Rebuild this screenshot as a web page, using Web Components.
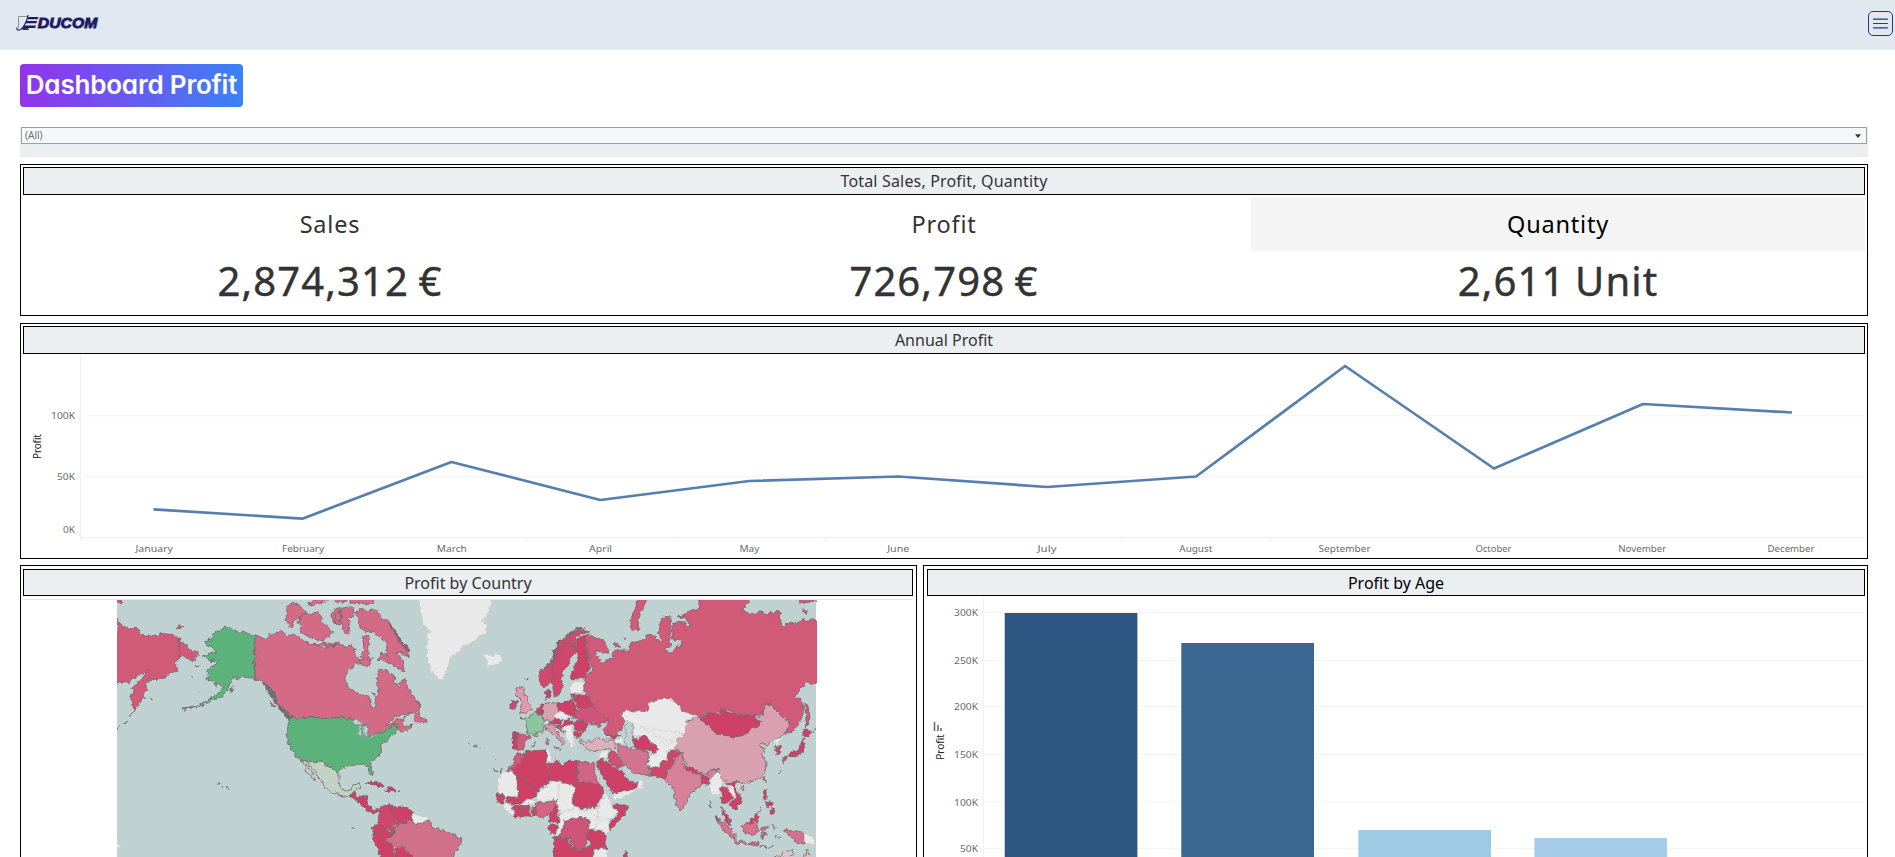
<!DOCTYPE html>
<html lang="en">
<head>
<meta charset="utf-8">
<title>Dashboard Profit</title>
<style>
html,body{margin:0;height:100%;overflow:hidden;background:#fff;font-family:"Noto Sans","Open Sans",sans-serif}
</style>
</head>
<body>
<profit-dashboard></profit-dashboard>
<script>
const define = (name, html, setup) => customElements.define(name, class extends HTMLElement {
  constructor() {
    super();
    this.attachShadow({ mode: 'open' });
  }
  connectedCallback() {
    this.shadowRoot.innerHTML = html;
    if (setup) setup.call(this, this.shadowRoot);
  }
});

define('educom-logo', `
<style>:host{display:block;width:84px;height:20px}svg{display:block}</style>
<svg width="84" height="20" viewBox="15 13 84 20">
  <path d="M18.5 28V16.5H28" fill="none" stroke="#8b8e96" stroke-width="1"/>
  <path d="M23 28h5l1 2h-7z" fill="#333"/>
  <path d="M17 27.5q-1 3 2.500 2.500Q24 28.500 27.500 18L28 15" fill="none" stroke="#2a2570" stroke-width="1.200"/>
  <path d="M28.500 17H38.500L37.700 19.300H27.300zM26.500 21H37.200L36.400 23.300H25zM24.500 25.500H36L35.200 28H22.500z" fill="#211b66"/>
  <text x="37.800" y="27.800" textLength="59.500" lengthAdjust="spacingAndGlyphs" font-family="Liberation Sans,sans-serif" font-weight="700" font-style="italic" font-size="15.300" fill="#211b66" stroke="#211b66" stroke-width=".9">DUCOM</text>
</svg>`);

define('menu-button', `
<style>:host{display:block}button{display:block;box-sizing:border-box;width:25px;height:25px;padding:0;border:1px solid #1e3a8a;border-radius:5px;background:none}svg{display:block}</style>
<button aria-label="Menu"><svg width="23" height="23" fill="none" stroke="#1e3a8a" stroke-width="1.200" stroke-linecap="round"><path d="M4.500 7.200h14M4.500 11.500h14M4.500 15.800h14"/></svg></button>`);

define('top-bar', `
<style>:host{display:flex;box-sizing:border-box;height:50px;padding:11px 2px 0 15px;justify-content:space-between;align-items:flex-start;background:#e2e8f0}educom-logo{margin-top:2px}</style>
<educom-logo></educom-logo><menu-button></menu-button>`);

define('page-badge', `
<style>:host{display:flex;box-sizing:border-box;width:223px;height:43px;border-radius:4px;align-items:center;justify-content:center;background:linear-gradient(90deg,#9333ea,#3b82f6);color:#fff;font:600 26px/41px Inter,sans-serif;font-feature-settings:"cv11";letter-spacing:-.2px;padding-bottom:2px;white-space:nowrap}</style>
<slot></slot>`);

define('filter-select', `
<style>:host{display:block;height:30px;background:#ebeff2;padding:0 1px;box-sizing:border-box}
div{display:flex;box-sizing:border-box;height:17px;border:1px solid #a0a0a0;background:#f5f7f9;align-items:center;justify-content:space-between;padding:0 5px 0 3px;font-size:10px;line-height:15px;color:#707070}</style>
<div><span><slot></slot></span><svg width="6" height="4"><path d="M0 .3h6L3 4z" fill="#333"/></svg></div>`);

define('dash-panel', `
<style>:host{display:flex;flex-direction:column;box-sizing:border-box;border:1px solid #000;padding:2px;background:#fff;overflow:hidden}
h2{flex:none;box-sizing:border-box;margin:var(--title-margin,0);height:var(--title-height,28px);border:1px solid #000;background:#ebeff2;font-weight:400;font-size:16px;line-height:26px;text-align:center;color:var(--title-color,#333);letter-spacing:var(--title-spacing,0)}
svg{display:block}</style>
<h2></h2><slot></slot>`, function (root) {
  root.querySelector('h2').textContent = this.getAttribute('heading');
});

define('kpi-cell', `
<style>:host{display:flex;flex-direction:column;flex:1;text-align:center;white-space:nowrap}
.l{height:54px;line-height:55px;font-size:23.500px;color:#333;letter-spacing:.8px}
:host([active]) .l{background:#f4f4f4;color:#000}
.v{height:60px;line-height:60px;font-size:40px;color:#333;-webkit-text-stroke:.4px #333;letter-spacing:1.100px;word-spacing:-2px}</style>
<div class="l"><slot></slot></div><div class="v"><slot name="value"></slot></div>`);

const NS = 'font-family="Noto Sans,sans-serif"';
const label = (x, y, w, t, anchor) =>
  `<text ${NS} x="${x}" y="${y}" font-size="9.800" fill="#6a6a6a" text-anchor="${anchor}" textLength="${w}" lengthAdjust="spacingAndGlyphs">${t}</text>`;
const axisTitle = (x, y, w) =>
  `<text ${NS} font-size="10" fill="#222" text-anchor="middle" textLength="${w}" transform="translate(${x} ${y}) rotate(-90)">Profit</text>`;

define('line-chart', '<style>:host,svg{display:block}</style><div></div>', function (root) {
  const months = [['January',37.5,509.3],['February',42,518.7],['March',30,462],['April',23,500],['May',20,481],['June',22,476.5],['July',19,487],['August',33,476.5],['September',52,366],['October',36,468.5],['November',48,404],['December',47,412.5]];
  let s = '<path d="M80.500 356V540M80 537.500H1865" stroke="#f0f0f0" fill="none"/><path d="M77 415.800H1865M77 476.700H1865" stroke="#f7f7f7" stroke-width="1.500"/>';
  months.forEach(([n, w, y], i) => {
    const tick = 80.5 + 148.75 * (i + 1);
    s += `<path d="M${tick} 538v3" stroke="#f0f0f0"/>` + label(154.2 + 148.8 * i, 552, w, n, 'middle');
  });
  s += label(75, 419, 24, '100K', 'end') + label(75, 480, 18, '50K', 'end') + label(75, 533, 12, '0K', 'end') + axisTitle(40.5, 446.5, 25);
  s += `<polyline fill="none" stroke="#557fae" stroke-width="2.700" stroke-linejoin="round" points="${months.map((m, i) => (153.5 + 148.95 * i).toFixed(1) + ',' + m[2]).join(' ')}"/>`;
  root.querySelector('div').innerHTML = `<svg width="1842" height="202" viewBox="23 354 1842 202">${s}</svg>`;
});

define('bar-chart', '<style>:host,svg{display:block}</style><div></div>', function (root) {
  let s = '<path d="M983.500 599V857" stroke="#f0f0f0"/>';
  [[612.5,'300K'],[660.5,'250K'],[706.5,'200K'],[754.5,'150K'],[802,'100K'],[848.5,'50K']].forEach(([y, t]) => {
    s += `<path d="M980 ${y}H1865" stroke="#f4f4f4"/>` + label(978, y + 3.5, t.length * 6, t, 'end');
  });
  [[1004.7,613,'#2b5782'],[1181.3,643,'#3b6793'],[1358.4,830,'#9fcae4'],[1534.4,838,'#a5cde9']].forEach(([x, y, c]) => {
    s += `<rect x="${x}" y="${y}" width="132.700" height="400" fill="${c}"/>`;
  });
  s += axisTitle(944, 747, 25.5) + '<path d="M934.500 722v9M938 725v6M941 728v3" stroke="#666" stroke-width="1.500"/>';
  root.querySelector('div').innerHTML = `<svg width="938" height="261" viewBox="927 596 938 261">${s}</svg>`;
});

// Coastlines are listed on four adjoining sheets; the letter selects the sheet, its value is the horizontal shift.
const SHEET = { A: 0, B: 690, C: 1140, D: 1590 };
const outline = str => {
  let off = 0;
  return str.trim().split(/\s+/).map(tok => {
    if (tok in SHEET) { off = SHEET[tok]; return ''; }
    const [x, y] = tok.split(',').map(Number);
    return (x + off) + ',' + y;
  }).join(' ').trim();
};
const RED = '#cf4066', RUS = '#d05a78', CAN = '#d36a86', GRN = '#5bb27a', NIL = '#e9e9e9', SEA = '#c0d1d1';
const LAND = [
[RUS,'A 22,88 30,95 42,110 58,114 75,112 88,120 92,135 110,138 135,136 145,140 152,130 180,133 207,145 215,155 230,165 245,180 262,185 265,193 255,202 248,215 235,205 220,198 209,205 195,215 205,230 205,240 190,243 175,252 165,265 150,265 135,268 118,268 108,285 110,300 100,310 100,325 88,340 78,360 72,362 66,335 65,310 75,290 88,275 100,260 118,240 108,245 98,250 90,250 80,262 65,265 60,280 45,275 30,280 15,275'],
[RUS,'A 207,145 209,205'],[RUS,'A 15,25 38,30 32,38 15,40'],[RUS,'A 198,112 210,103 222,108 215,115 203,116'],
[GRN,'A 435,137 410,128 380,125 365,115 345,109 330,122 312,125 305,145 287,155 295,168 315,180 318,188 300,190 280,198 300,212 318,210 320,222 300,232 290,245 300,262 290,268 305,275 318,285 330,283 345,288 330,305 310,318 275,343 245,353 215,358 245,355 275,346 305,332 330,322 345,308 358,292 362,272 380,255 375,270 400,260 420,265 435,268'],
['#6c8070','A 356,300 368,290 370,298 360,310'],['#6c8070','A 255,226 270,229 268,232'],['#6c8070','A 247,264 251,266'],['#6c8070','A 264,302 268,308'],
['#6c8070','A 323,578 328,581'],['#6c8070','A 336,585 342,588'],[GRN,'A 346,592 354,596 350,600'],
['#777','A 72,362 62,374 58,380'],['#777','A 50,392 44,402'],['#777','A 35,406 22,416'],['#8c5565','A 124,322 130,326'],
[CAN,'A 435,137 450,145 468,148 480,133 500,130 515,125 530,138 550,132 575,145 590,162 615,160 640,175 660,165 680,160 B 5,165 20,172 35,165 45,180 50,200 62,212 62,222 50,220 38,228 25,240 15,265 20,285 30,298 60,312 88,322 92,345 100,358 108,345 105,325 115,315 118,300 110,280 112,262 112,240 130,238 150,250 165,260 165,275 175,288 185,275 192,265 205,295 225,325 242,345 238,362 215,370 190,375 165,380 150,395 140,408 165,392 185,385 195,380 185,400 195,410 215,405 215,412 185,428 172,420 175,405 168,400 160,405 150,418 110,435 90,440 85,430 85,415 70,400 50,390 40,388 15,388 0,383 A 545,383 525,360 505,345 490,315 475,300 460,280 450,270 435,268'],
['#66756e','A 458,278 470,283 482,295 496,318 502,340 525,362 545,385 543,398 530,380 505,355 490,325 475,308'],
[CAN,'A 482,336 494,352 486,350'],
[CAN,'A 532,45 565,42 585,65 570,85 555,90 545,110 525,95 530,70'],
[CAN,'A 585,65 605,75 620,65 640,85 635,100 650,105 668,130 650,145 640,155 615,145 600,140 575,130 570,120 580,110 565,100 570,85'],
[CAN,'A 590,42 620,25 660,25 640,38 610,45'],[CAN,'A 670,62 690,52 695,70 690,105 675,100 665,80'],[CAN,'B 2,55 38,50 42,70 25,85 30,105 25,135 15,130 5,110'],[CAN,'A 585,158 620,162 655,160 680,165 650,168 600,168'],
[CAN,'B 30,25 103,25 100,40 60,42 30,38'],[CAN,'B -15,70 -2,60 0,90 -12,100'],[CAN,'A 670,25 710,25 700,40 680,36'],
[CAN,'B 45,70 60,58 80,62 105,60 120,65 125,85 145,95 165,120 175,140 185,155 208,180 205,200 190,195 170,185 190,215 192,245 175,235 150,220 130,210 112,212 120,195 140,190 140,160 125,145 105,130 85,120 75,125 60,110 50,90'],
[CAN,'B 68,140 85,135 90,160 80,185 95,205 88,225 75,218 60,200 72,180'],[CAN,'B 65,205 80,205 92,222 80,230 65,225'],[CAN,'B 225,375 235,362 240,378 255,385 260,400 240,398 222,392'],
['#75656a','B 100,305 107,310 104,317'],['#94606f','B 145,95 165,120 175,140 185,155 208,180 203,182 183,160 168,138'],
[GRN,'A 540,383 B 15,383 35,388 55,398 65,405 80,410 85,430 90,440 110,430 125,428 145,418 155,405 168,400 175,415 165,430 150,440 135,455 122,465 125,485 110,505 95,515 92,525 100,545 98,560 90,555 85,535 75,525 55,525 40,530 20,530 5,535 -5,550 A 678,548 665,528 650,532 640,517 625,517 600,518 575,510 560,500 545,480 535,455 532,430 535,400'],
[SEA,'B 37,396 52,388 68,395 70,402 50,404'],[SEA,'B 57,412 64,408 65,442 57,435'],[SEA,'B 70,408 85,415 82,430 74,440'],[SEA,'B 85,442 108,432 108,438 92,444'],
['#c1d3c4','A 575,510 600,518 625,517 640,517 650,532 665,528 678,548 687,553 688,575 690,590 705,602 B 20,603 30,600 35,585 60,582 62,592 50,603 42,608 35,622 25,620 A 690,615 665,605 645,597 640,580 620,555 605,535 595,520'],
['#c1d3c4','A 575,512 587,520 600,540 612,560 618,572 605,565 590,540 580,520'],
[NIL,'B 235,25 455,25 455,45 445,60 440,75 430,90 440,110 435,130 400,155 375,165 355,185 330,205 325,225 318,245 310,270 290,262 275,240 265,215 258,190 265,165 260,140 270,125 250,105 245,80 240,55'],
[NIL,'B 428,195 445,192 455,200 470,192 485,195 488,208 475,222 455,227 440,222 445,210'],
[RED,'B 75,578 95,573 115,580 135,590 130,596 110,588 90,580'],[RED,'B 135,600 150,593 168,600 165,605 150,605'],['#777','B 175,603 186,604'],['#777','B 34,713 45,716'],['#777','B 220,633 221,635'],['#777','B 400,465 410,469'],['#777','B 418,473 422,476'],['#777','B 385,460 388,461'],['#777','B 462,540 472,542'],['#777','B 480,543 490,538'],['#777','B 467,508 470,509'],
[RED,'B 30,618 40,605 48,612 45,620 65,618 80,622 80,640 85,650 100,662 115,658 118,668 100,668 85,665 70,650 60,635 45,628'],
['#cf486c','B 118,658 135,645 150,640 150,655 155,675 175,685 175,702 162,705 160,735 150,720 125,710 108,700 115,690'],
[RED,'B 150,645 165,652 190,648 205,655 218,665 213,680 218,690 200,690 200,700 180,705 175,690 155,678'],
[RED,'B 100,710 110,702 128,712 115,728 98,728'],
[NIL,'B 218,668 235,680 262,680 265,690 245,700 225,700 213,685'],
['#d0708b','B 160,735 165,708 180,705 195,700 215,690 220,700 240,700 265,690 272,700 280,712 320,725 350,735 365,750 362,765 345,785 338,810 215,810 215,795 187,768 160,770 140,757 140,745'],
[RED,'B 98,728 115,730 128,712 145,722 160,735 140,745 138,755 160,770 165,810 125,810 110,770 95,745'],[RED,'B 165,775 185,770 215,795 215,810 165,810'],
[RUS,'C 285,140 300,135 330,145 355,170 355,190 330,188 315,185 325,205 340,220 350,205 370,205 370,185 395,180 420,180 420,160 440,155 460,150 475,135 D 30,132 55,150 68,158 60,140 57,105 75,80 90,75 92,105 90,150 92,170 75,185 95,185 108,165 125,167 120,152 105,150 98,150 95,110 110,98 130,95 155,115 140,85 115,80 130,75 145,65 175,55 178,25 330,25 320,45 290,78 310,60 330,75 360,65 380,75 400,65 420,65 425,110 435,115 440,95 465,105 485,90 540,90 540,278 500,280 480,300 460,325 480,325 490,345 492,370 475,405 455,425 435,435 450,400 450,390 430,385 405,360 395,345 375,342 370,370 340,380 300,370 260,360 240,365 225,372 200,370 175,380 150,370 130,365 110,335 75,322 25,340 25,365 0,365 C 440,360 400,365 395,375 405,395 395,415 380,430 390,440 370,440 345,432 340,415 355,400 350,380 325,368 310,350 305,340 290,315 280,300 285,265 305,240 290,165'],
[RUS,'C 445,25 472,25 455,65 440,90 450,118 430,120 418,95 435,60'],[RUS,'C 374,155 382,157 388,173 374,172'],[RUS,'C 398,142 410,142 408,150'],[RUS,'D 470,25 500,25 530,30 500,38 475,35'],[RUS,'D 488,58 502,62 500,70 485,66'],[RUS,'D 495,335 505,355 510,385 500,410 497,380'],
['#d8a0b0','D 175,380 190,395 200,405 235,430 280,440 320,430 340,415 365,400 345,385 370,372 375,342 395,345 405,360 430,385 450,392 448,405 430,435 405,448 380,465 365,460 358,470 380,478 368,490 378,520 375,545 350,570 310,580 300,580 280,575 260,580 245,565 240,540 225,535 200,550 180,545 145,530 130,505 125,490 100,470 115,445 135,430 135,400 160,385'],
['#d8a0b0','D 302,592 313,590 310,602 302,600'],
[RED,'D 180,380 215,370 240,372 245,355 265,368 290,370 320,378 345,375 345,388 365,400 340,412 320,430 280,440 230,432 200,405'],
[NIL,'C 395,375 400,365 D 0,365 25,365 25,340 75,322 110,335 130,365 150,370 175,380 160,385 140,390 135,430 115,445 100,480 80,480 85,500 75,515 45,530 25,525 25,500 50,490 0,435 C 445,440 430,440 425,420 410,400'],
[NIL,'D 0,412 30,425 60,440 80,455 100,445 115,432 135,430'],[NIL,'D 60,460 75,445 100,455 85,465'],
[SEA,'C 405,405 415,397 430,402 425,430 430,470 415,478 405,450 410,430'],
[RED,'C 425,440 445,450 460,435 480,452 495,465 505,480 490,490 470,480 435,475'],
['#d27390','C 380,460 400,470 430,480 460,475 475,490 475,520 485,555 460,555 430,545 400,520 385,490'],
['#cf486c','D 30,535 60,528 80,510 85,485 100,480 125,490 105,505 95,530 80,545 75,570 60,560 35,555'],
['#d6809a','D 75,570 80,545 95,530 105,500 125,490 130,520 140,535 180,550 190,545 200,555 215,540 235,535 225,555 210,570 195,560 190,580 165,600 145,620 135,640 130,655 120,662 110,645 100,600 90,585'],
[RED,'D 135,525 180,545 180,555 140,540'],[RED,'D 183,555 205,565 205,585 185,578'],[NIL,'D 215,570 225,550 240,545 245,570 250,590 235,600 235,615 220,612 210,590'],[NIL,'D 133,655 143,665 138,672'],
[NIL,'D 400,450 425,440 410,470'],[RED,'D 405,470 420,468 422,490 408,495'],[RED,'D 490,418 500,415 515,430 500,438 488,440'],[RED,'D 488,440 495,455 490,485 465,500 440,500 430,520 428,505 455,490 480,475'],[RED,'D 370,565 378,560 375,578'],['#777','D 515,428 528,416'],['#777','D 414,550 424,542'],
[RED,'D 238,592 260,590 275,605 280,625 260,635 250,640 245,640 245,615'],[RED,'D 260,578 290,575 285,590 305,625 298,645 285,660 265,640 280,630 290,625 280,600'],[NIL,'D 262,590 275,592 292,622 285,627 270,605'],[RED,'D 245,650 255,668 268,680 273,710 258,695 248,672'],
['#d6708c','D 225,680 250,695 285,730 285,750 260,730 240,705'],['#d6708c','D 285,752 320,755 355,762 355,768 310,762 285,758'],['#d6708c','D 305,705 330,700 345,690 355,690 350,705 355,720 345,735 310,728'],[RED,'D 316,700 340,685 348,670 360,680 345,692 330,703'],['#d6708c','D 362,715 385,708 370,722 380,740 372,735 368,748'],['#777','D 362,767 380,770'],['#777','D 385,772 398,768'],['#d6708c','D 402,705 408,712 404,718'],['#777','D 405,738 420,742'],
[RED,'D 370,600 380,598 382,620 376,628 370,625'],[RED,'D 380,632 392,630 398,645 390,650 380,642'],[RED,'D 390,660 402,652 404,672 392,672'],['#777','D 352,672 368,650'],['#777','D 372,632 380,648 388,655'],['#777','D 208,632 213,655'],['#777','D 226,680 240,696'],
['#d6708c','D 435,715 450,722 460,725 490,727 492,762 470,755 450,735 435,728'],[NIL,'D 492,728 520,745 527,760 495,762'],['#dcc3cb','D 400,801 425,795 430,785 460,782 462,790 445,810'],['#dcc3cb','D 492,810 500,775 515,810'],
['#cf486c','C 60,340 80,328 82,350 72,358 60,357'],['#dc9aad','C 80,300 90,290 103,292 102,310 108,325 122,345 128,360 115,365 88,370 95,360 92,348 97,335 85,320 78,310'],['#777','C 107,268 112,264'],['#777','C 76,298 82,292'],
['#cf4a6e','C 148,245 170,230 188,210 195,180 205,160 235,135 270,120 298,122 295,130 275,128 260,140 258,155 235,155 215,170 200,190 190,220 190,260 185,275 160,292 148,280'],['#85606a','C 148,245 170,228 186,208 193,180 203,158 235,130 270,112 285,113 262,120 238,133 206,161 196,183 189,211 172,230'],
['#d0466c','C 215,170 235,155 255,158 258,185 240,205 235,230 222,240 215,265 218,290 205,318 192,318 188,285 190,220 200,190'],[RED,'C 258,155 272,135 285,140 288,165 300,235 285,262 245,270 245,245 255,225 265,200 258,185'],[RED,'C 167,305 180,300 180,325 168,328'],
[NIL,'C 245,280 280,272 280,310 240,305'],[RED,'C 245,312 268,312 268,335 250,332'],[RED,'C 268,320 290,315 308,345 295,355 260,352'],[RED,'C 202,340 240,330 258,338 256,370 250,382 205,365'],['#d8a0b0','C 160,340 175,335 200,340 203,365 198,385 180,395 160,390 155,370'],[RED,'C 150,345 158,345 158,360 155,375 138,368'],
['#8cc6a0','C 92,385 110,385 130,367 160,378 162,395 155,405 160,425 135,435 112,430 112,400'],['#d25a7c','C 65,430 95,432 122,438 105,460 100,478 80,482 70,475'],[RED,'C 66,430 82,433 80,470 68,475'],[NIL,'C 160,398 180,395 180,403 162,405'],
['#dc9aad','C 162,408 185,400 195,405 195,418 210,440 225,455 215,465 210,450 190,435 180,420 165,418'],['#dc9aad','C 192,470 210,472 208,478'],['#dc9aad','C 168,445 175,445 175,465 168,462'],['#777','C 124,465 140,460'],[RED,'C 180,398 200,385 215,388 212,402 190,402'],[NIL,'C 195,372 210,366 240,378 225,388 200,385'],[RED,'C 210,408 235,388 250,392 235,410 215,415'],
[RED,'C 245,398 275,390 290,400 290,425 255,420'],[RED,'C 250,425 280,427 275,445 252,440'],[NIL,'C 220,410 240,405 250,425 250,445 258,455 248,475 235,455 228,430'],[RED,'C 200,405 215,405 210,412 225,430 212,425'],
['#d0547a','C 252,370 270,352 310,350 325,368 350,380 350,395 330,405 320,412 310,400 290,402 275,390 255,388'],['#dbb0bd','C 272,452 290,455 315,445 345,450 375,450 375,475 345,478 320,485 290,480 278,470'],[NIL,'C 372,447 400,448 405,458 378,460'],[RED,'C 350,435 385,442 372,448'],
[NIL,'C 330,487 357,480 350,500 325,505'],['#cf5074','C 350,505 365,480 380,490 400,525 385,535 360,515'],[RED,'C 320,512 340,508 335,525 322,530'],
[NIL,'C 365,612 400,605 440,592 445,568 462,575 450,595 425,610 375,632'],[RED,'C 325,530 345,510 380,535 405,555 415,572 442,578 440,595 400,605 370,612 355,590 335,555'],
['#d0587a','C 60,530 75,500 83,490 105,490 108,505 75,535 45,545'],[NIL,'C 25,570 40,545 65,545 82,560 82,620 45,618 25,608'],[RED,'C 65,542 105,505 108,485 165,480 170,510 175,550 182,572 145,600 80,560'],[NIL,'C 168,478 180,478 182,510 172,515'],
[NIL,'C 145,605 190,572 215,575 255,590 255,620 250,650 290,660 325,655 345,605 362,640 395,660 355,690 355,728 330,720 290,710 225,705 208,740 190,740 205,700 210,670 200,630 145,635'],[NIL,'C 208,575 210,605 200,630'],[NIL,'C 210,672 250,655'],[NIL,'C 262,655 290,685 325,690 355,690'],[NIL,'C 325,655 325,690 320,715'],
[RED,'C 175,520 200,510 215,525 240,510 262,515 263,585 255,590 215,575 178,570'],['#d26584','C 265,515 300,520 315,520 312,535 328,580 265,580'],[RED,'C 262,580 330,580 342,605 325,635 315,655 275,655 250,650 250,620'],
[RED,'C 82,560 145,600 140,622 115,625 95,645 50,640 50,620 82,622'],[RED,'C 22,615 38,612 45,640 20,635'],[NIL,'C 35,640 65,645 70,680 50,665'],[NIL,'C 90,645 120,625 140,640 100,650'],[RED,'C 70,650 95,648 97,682 75,685'],[RED,'C 97,648 118,645 122,680 97,682'],
['#d26584','C 138,640 200,632 195,655 180,670 160,685 138,675'],[RED,'C 125,650 135,645 138,675 128,680'],[RED,'C 178,675 200,640 205,665 210,695 180,695'],[RED,'C 172,708 200,702 200,730 180,732'],
[NIL,'C 315,780 355,778 350,810 310,810'],['#d0547a','C 225,690 265,682 298,690 295,720 290,750 285,780 250,775 240,745 195,742 215,730'],[RED,'C 190,745 235,745 245,775 275,782 300,765 312,770 305,810 192,810'],[RED,'C 300,718 345,725 350,775 315,775 290,745'],
[RED,'C 370,645 415,645 405,675 360,720 358,700 385,670'],[RED,'C 395,810 405,785 412,810']
];

define('country-map', `<style>:host{display:block;border-top:1px solid #e6e6e6;margin-top:3px}svg{display:block;margin-left:94px}</style><div></div>`, function (root) {
  const flat = new Set([NIL, SEA]);
  const shapes = LAND.map(([c, p]) => {
    const line = flat.has(c) ? (c === NIL ? '#b9b9b9' : '#8f9898') : '#75646a';
    return `<polygon points="${outline(p)}" fill="${c}" stroke="${line}" stroke-width="${c === NIL ? 1 : 2.5}"/>`;
  }).join('');
  root.querySelector('div').innerHTML = `<svg width="700" height="257" viewBox="117 600 700 257">
    <defs><filter id="coast" x="0" y="0" width="1" height="1" color-interpolation-filters="sRGB"><feTurbulence type="fractalNoise" baseFrequency=".2" numOctaves="2" seed="4"/><feDisplacementMap in="SourceGraphic" scale="6" xChannelSelector="R" yChannelSelector="G"/></filter></defs>
    <rect x="117" y="600" width="699" height="257" fill="${SEA}"/>
    <g filter="url(#coast)"><g transform="translate(110 590) scale(.33333)" stroke-linejoin="round">${shapes}</g></g>
    <path d="M117 844l4 3h-4z" fill="#eee"/></svg>`;
});

define('profit-dashboard', `
<style>
:host{display:block;height:100vh;overflow:hidden}
main{display:flex;flex-direction:column;padding:14px 27px 0 20px}
filter-select{margin-top:20px}
.kpi{margin-top:7px;height:152px;--title-spacing:.17px}
.cells{display:flex;margin-top:2px}
.annual{margin-top:7px;height:236px}
.row{display:grid;grid-template-columns:897px 945px;gap:6px;margin-top:6px}
.row dash-panel{height:400px;--title-margin:1px 0 0;--title-height:27px}
.row .country{padding-right:3px}
.row .age{padding-left:3px;--title-color:#000}
</style>
<top-bar></top-bar>
<main>
  <page-badge>Dashboard Profit</page-badge>
  <filter-select>(All)</filter-select>
  <dash-panel class="kpi" heading="Total Sales, Profit, Quantity"><div class="cells">
    <kpi-cell>Sales<span slot="value">2,874,312 €</span></kpi-cell>
    <kpi-cell>Profit<span slot="value">726,798 €</span></kpi-cell>
    <kpi-cell active>Quantity<span slot="value">2,611 Unit</span></kpi-cell>
  </div></dash-panel>
  <dash-panel class="annual" heading="Annual Profit"><line-chart></line-chart></dash-panel>
  <div class="row">
    <dash-panel class="country" heading="Profit by Country"><country-map></country-map></dash-panel>
    <dash-panel class="age" heading="Profit by Age"><bar-chart></bar-chart></dash-panel>
  </div>
</main>`);
</script>
</body>
</html>
